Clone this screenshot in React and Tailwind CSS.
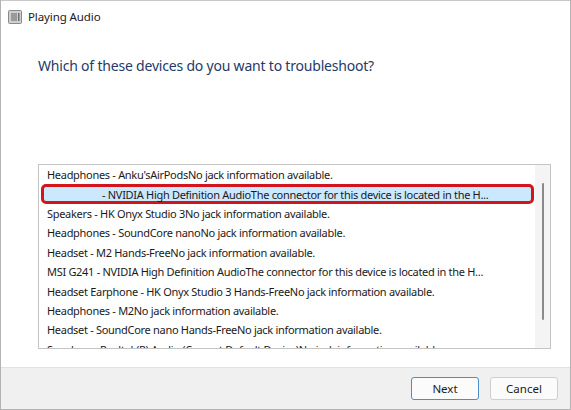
import React from "react";

const devices = [
  "Headphones - Anku'sAirPodsNo jack information available.",
  "- NVIDIA High Definition AudioThe connector for this device is located in the H...",
  "Speakers - HK Onyx Studio 3No jack information available.",
  "Headphones - SoundCore nanoNo jack information available.",
  "Headset - M2 Hands-FreeNo jack information available.",
  "MSI G241 - NVIDIA High Definition AudioThe connector for this device is located in the H...",
  "Headset Earphone - HK Onyx Studio 3 Hands-FreeNo jack information available.",
  "Headphones - M2No jack information available.",
  "Headset - SoundCore nano Hands-FreeNo jack information available.",
  "Speakers - Realtek(R) Audio (Current Default Device)No jack information available.",
];

const AppIcon = () => (
  <svg width="14" height="14" viewBox="0 0 14 14">
    <rect x="0.5" y="0.5" width="13" height="13" rx="1" fill="#cfcfcf" stroke="#8a8a8a" />
    <rect x="3" y="3" width="6" height="8" fill="#9a9a9a" />
    <rect x="10" y="3" width="1.5" height="8" fill="#6f6f6f" />
  </svg>
);

export default function App() {
  return (
    <div
      className="w-[571px] h-[410px] bg-white border-l border-r border-[#b4b4b4] flex flex-col overflow-hidden text-[#1a1a1a]"
      style={{ fontFamily: '"Noto Sans", "Open Sans", sans-serif' }}
    >
      {/* title bar */}
      <div className="h-[33px] flex items-center gap-[6px] pl-[7px] border-t border-[#c8c8c8]">
        <AppIcon />
        <span className="text-[11.5px] tracking-[-0.1px]">Playing Audio</span>
      </div>

      {/* content */}
      <div className="flex-1 flex flex-col pl-[37px] pr-[19px]">
        <h1 className="mt-[21px] text-[14px] tracking-[-0.2px] text-[#243a6a] leading-[24px]">
          Which of these devices do you want to troubleshoot?
        </h1>

        <div className="mt-[86px] h-[185px] border border-[#c4c4c4] flex overflow-hidden">
          <div className="flex-1 pl-[2px] overflow-hidden">
            {devices.map((d, i) =>
              i === 1 ? (
                <div
                  key={i}
                  className="h-[19.4px] flex items-center border-[3px] border-[#d3141c] rounded-[5px] bg-[#cce8ff] pl-[58px] mr-[1px] whitespace-nowrap text-[11px] tracking-[-0.3px] leading-none"
                >
                  {d}
                </div>
              ) : (
                <div
                  key={i}
                  className="h-[19.4px] flex items-center pl-[6px] whitespace-nowrap text-[11px] tracking-[-0.3px] leading-none"
                >
                  {d}
                </div>
              )
            )}
          </div>
          <div className="w-[15px] bg-[#f4f4f4] flex justify-center pt-[18px]">
            <div className="w-[2px] h-[137px] bg-[#8a8a8a] rounded-full" />
          </div>
        </div>
      </div>

      {/* footer */}
      <div className="h-[43px] bg-[#f0f0f0] border-t border-[#e2e2e2] flex items-center justify-end gap-[11px] pr-[12px] border-b border-b-[#b4b4b4]">
        <button className="w-[68px] h-[23px] bg-[#fbfbfb] border border-[#4a8fc7] rounded-[3px] text-[11.5px]">
          Next
        </button>
        <button className="w-[68px] h-[23px] bg-[#fbfbfb] border border-[#cfcfcf] rounded-[3px] text-[11.5px]">
          Cancel
        </button>
      </div>
    </div>
  );
}
